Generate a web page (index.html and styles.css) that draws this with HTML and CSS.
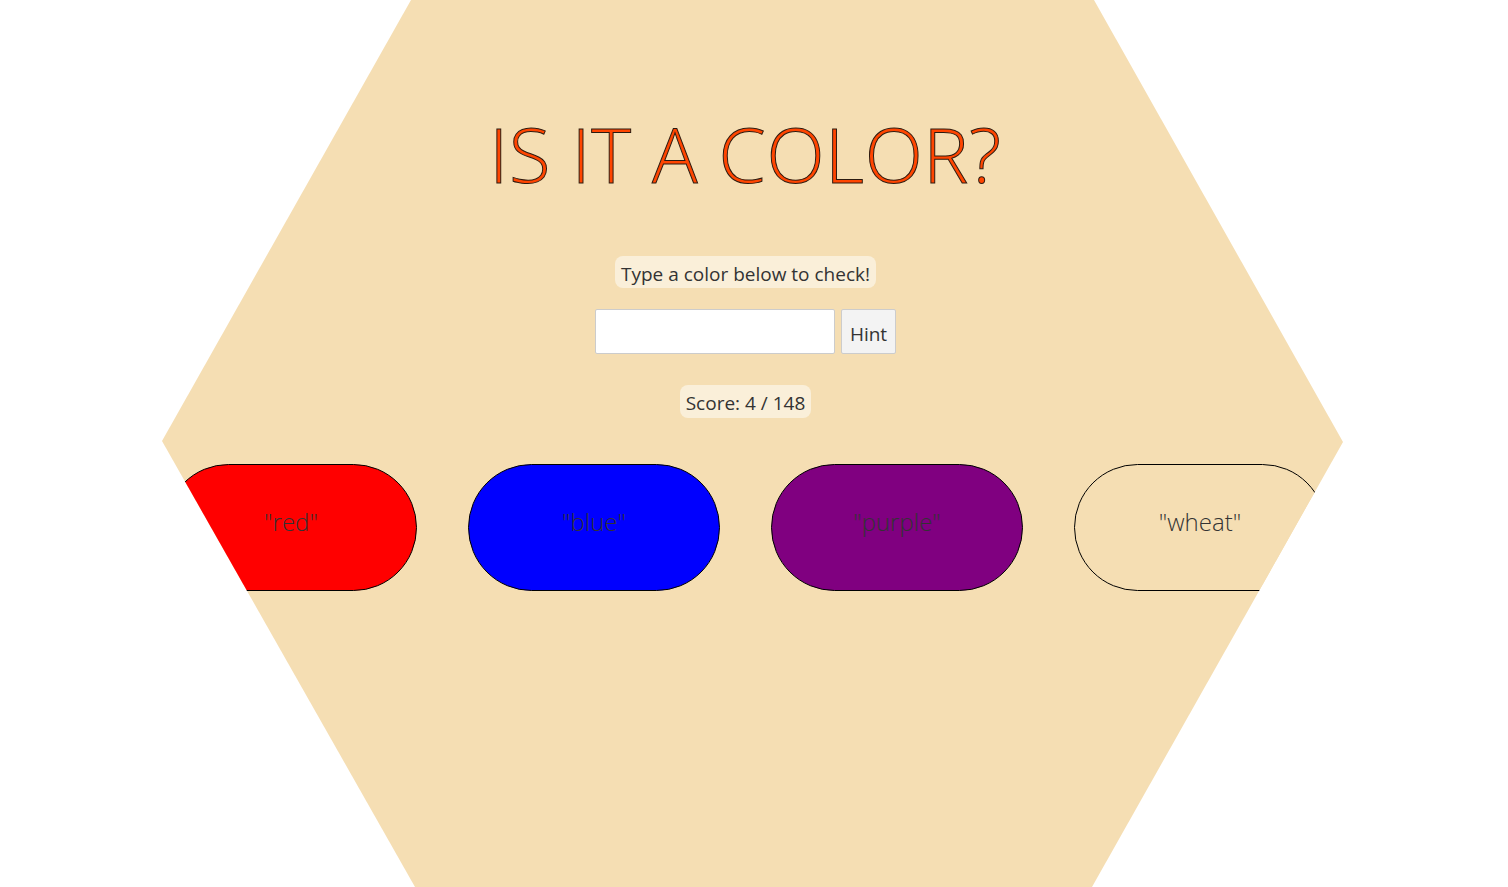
FILE: index.html
```html
<!DOCTYPE html>
<html>
<head>
<meta charset="utf-8">
<link rel="stylesheet" href="styles.css">
</head>
<body>
<div class="stage">
  <div class="content">
    <h1 class="title">IS IT A COLOR?</h1>
    <div class="label">Type a color below to check!</div>
    <div class="form">
      <input class="field" type="text">
      <button class="hint">Hint</button>
    </div>
    <div class="label score">Score: 4 / 148</div>
    <div class="pills">
      <div class="pill red">"red"</div>
      <div class="pill blue">"blue"</div>
      <div class="pill purple">"purple"</div>
      <div class="pill wheat">"wheat"</div>
    </div>
  </div>
</div>
</body>
</html>
```
FILE: styles.css
```css
html, body {
  margin: 0;
  padding: 0;
  background: #ffffff;
}
body {
  font-family: "Open Sans", "Noto Sans", sans-serif;
  color: #333333;
  overflow: hidden;
}
.stage {
  width: 1508px;
  height: 887px;
  background: #f5deb3;
  clip-path: polygon(411px 0, 1094px 0, 1343px 442px, 1092px 887px, 415px 887px, 162px 441px);
  box-sizing: border-box;
  padding-right: 17px;
}
.content {
  display: flex;
  flex-direction: column;
  align-items: center;
}
.title {
  margin: 104px 0 0 0;
  font-size: 76px;
  line-height: 100px;
  font-weight: 300;
  color: #ff4500;
  -webkit-text-stroke: 1px #2a1a10;
  letter-spacing: 0.6px;
}
.label {
  margin-top: 52px;
  background: #faefd9;
  border-radius: 8px;
  padding: 0 6px;
  height: 32px;
  line-height: 36px;
  font-size: 19px;
}
.form {
  margin-top: 21px;
  display: flex;
  gap: 6px;
}
.field {
  width: 240px;
  height: 45px;
  box-sizing: border-box;
  border: 1px solid #cccccc;
  border-radius: 2px;
  background: #fff;
  margin: 0;
}
.hint {
  height: 45px;
  box-sizing: border-box;
  border: 1px solid #cccccc;
  border-radius: 2px;
  background: #f3f3f3;
  font-family: "Open Sans", "Noto Sans", sans-serif;
  font-size: 19px;
  color: #333;
  padding: 4px 8px 0 8px;
  margin: 0;
}
.score {
  margin-top: 31px;
  height: 33px;
  line-height: 37px;
}
.pills {
  margin-top: 46px;
  display: flex;
  gap: 51px;
}
.pill {
  width: 252px;
  height: 127px;
  box-sizing: border-box;
  border: 1px solid #000;
  border-radius: 64px;
  display: flex;
  align-items: center;
  justify-content: center;
  font-size: 24px;
  font-weight: 300;
  color: #333;
  padding-bottom: 12px;
}
.red { background: #ff0000; }
.blue { background: #0000ff; }
.purple { background: #800080; }
.wheat { background: #f5deb3; }
```
